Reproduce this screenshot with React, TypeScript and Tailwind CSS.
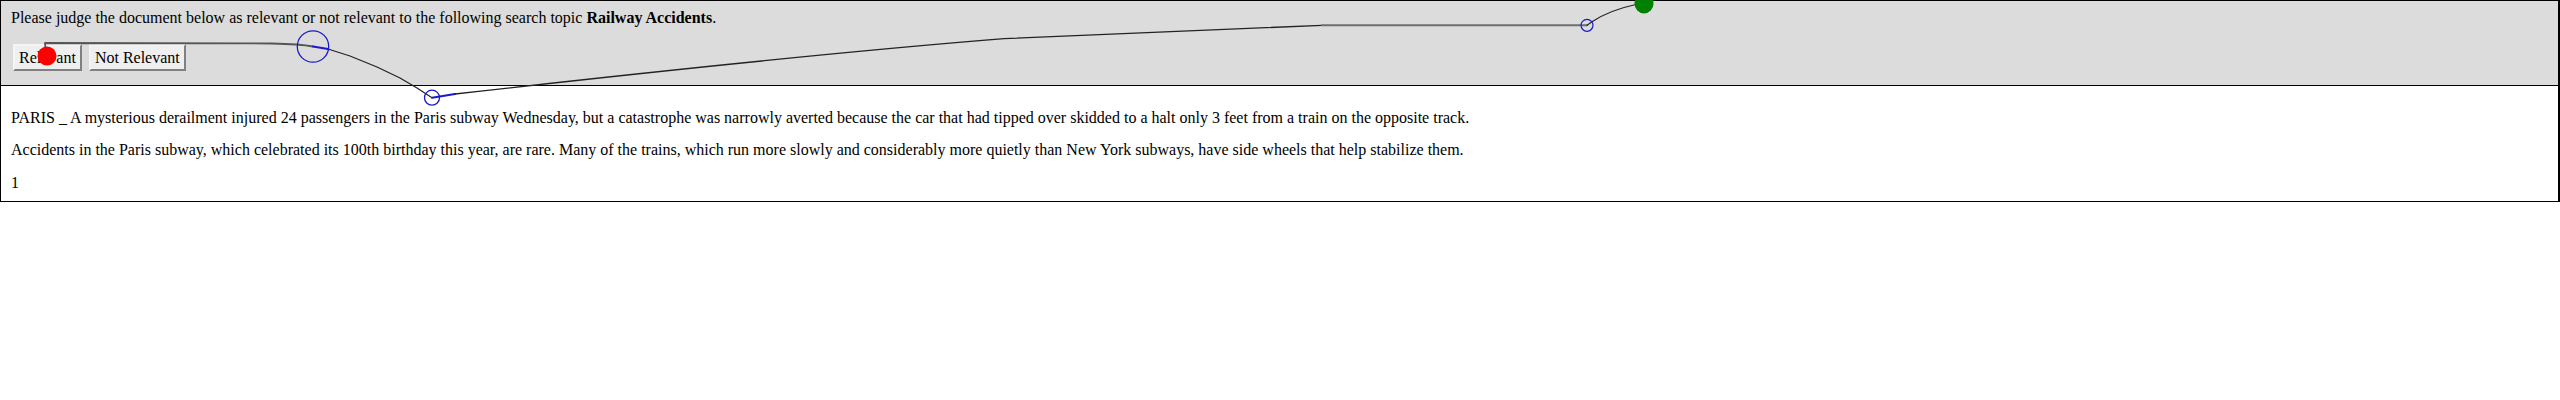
import React from "react"

const serif = { fontFamily: '"Liberation Serif", "Times New Roman", serif' }

const JudgeButton = ({ label }: { label: string }): JSX.Element => (
  <button
    type="button"
    className="h-[27px] border-2 border-t-[#f4f4f4] border-l-[#f4f4f4] border-r-[#808080] border-b-[#808080] bg-[#efefef] px-[4px] text-[16px] leading-[17px] text-black"
  >
    {label}
  </button>
)

// gaze trail drawn over the page
const Trail = (): JSX.Element => (
  <svg
    className="pointer-events-none absolute left-0 top-0"
    width="2560"
    height="400"
    viewBox="0 0 2560 400"
  >
    <g fill="none" strokeLinejoin="round" strokeLinecap="round">
      <path d="M46 55 L45 43 L272 43.5 Q300 44 313 46.5" stroke="#555" strokeWidth="1.8" />
      <path d="M313 46.5 L328 49" stroke="#1a1acc" strokeWidth="2" />
      <path d="M328 49 L350 56 L377 67 L400 78 L417 88 L432 97.7" stroke="#222" strokeWidth="1.2" />
      <path d="M432 97.7 L455 94" stroke="#1a1acc" strokeWidth="2" />
      <path d="M455 94 Q800 55 1004 38.7 L1322 25.3" stroke="#222" strokeWidth="1.3" />
      <path d="M1322 25.3 L1587 25.3" stroke="#6e6e6e" strokeWidth="2" />
      <path d="M1587 25.3 L1592 21.7 Q1610 10 1636 4.5" stroke="#222" strokeWidth="1.2" />
      <circle cx="313" cy="46.5" r="15.7" stroke="#1a1acc" strokeWidth="1.3" />
      <circle cx="432" cy="97.7" r="7.5" stroke="#1a1acc" strokeWidth="1.3" />
      <circle cx="1587" cy="25.3" r="6" stroke="#1a1acc" strokeWidth="1.2" />
    </g>
    <ellipse cx="1644" cy="3.5" rx="9.5" ry="10" fill="#008000" />
    <circle cx="47" cy="56" r="9.5" fill="#ff0000" />
  </svg>
)

const App = (): JSX.Element => {
  return (
    <div className="relative min-h-[400px] bg-white text-black" style={serif}>
      <div className="w-full border border-r-2 border-black">
        <div className="flex h-[85px] flex-col border-b border-black bg-[#dcdcdc] px-[10px] pt-[8px]">
          <p className="text-[16px] leading-[17px]">
            Please judge the document below as relevant or not relevant to the following search topic{" "}
            <b>Railway Accidents</b>.
          </p>
          <div className="ml-[2px] mt-[18px] flex gap-[7px]">
            <JudgeButton label="Relevant" />
            <JudgeButton label="Not Relevant" />
          </div>
        </div>
        <div className="flex flex-col gap-[14.5px] px-[10px] pb-[9px] pt-[22.5px] text-[16px] leading-[18px]">
          <p>
            PARIS _ A mysterious derailment injured 24 passengers in the Paris subway Wednesday, but a catastrophe was
            narrowly averted because the car that had tipped over skidded to a halt only 3 feet from a train on the
            opposite track.
          </p>
          <p>
            Accidents in the Paris subway, which celebrated its 100th birthday this year, are rare. Many of the trains,
            which run more slowly and considerably more quietly than New York subways, have side wheels that help
            stabilize them.
          </p>
          <p>1</p>
        </div>
      </div>
      <Trail />
    </div>
  )
}

export default App
